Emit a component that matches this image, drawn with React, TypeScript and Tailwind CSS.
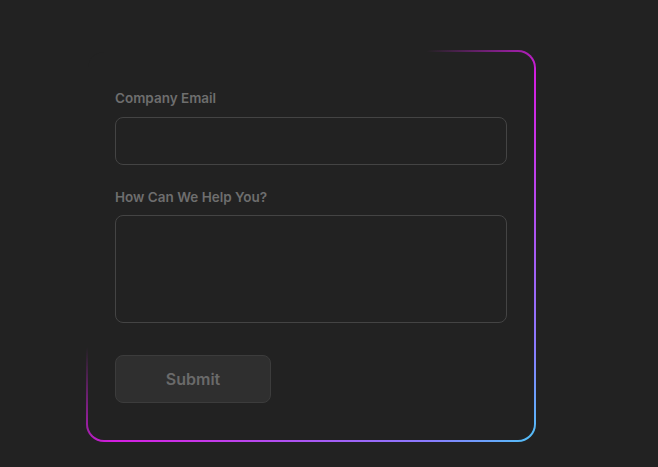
import React from 'react';

const Field: React.FC<{ label: string; tall?: boolean; gap?: string }> = ({ label, tall, gap }) => (
  <div className="flex flex-col">
    <label className={`text-[13.5px] font-semibold leading-5 text-[#6e6e6e] ${gap ?? 'mb-2'}`}>{label}</label>
    {tall ? (
      <textarea className="h-[108px] w-full resize-none rounded-lg border border-[#444444] bg-[#222222] outline-none" />
    ) : (
      <input className="h-[48px] w-full rounded-lg border border-[#444444] bg-[#222222] outline-none" />
    )}
  </div>
);

export default function App() {
  return (
    <div
      className="min-h-[467px] w-full bg-[#222222] pl-[86px] pt-[50px]"
      style={{ fontFamily: 'Inter, "Noto Sans", sans-serif' }}
    >
      {/* Gradient border card */}
      <div className="w-[450px] rounded-[18px] bg-[linear-gradient(to_bottom_right,transparent_0%,transparent_38%,#d41ee0_53%,#c935e8_62%,#8a7cff_88%,#4fc3f7_100%)] p-[2px]">
        <div className="flex flex-col rounded-[16px] bg-[#222222] px-[27px] pb-[37px] pt-9">
          <Field label="Company Email" gap="mb-[9px]" />
          <div className="mt-[22px]">
            <Field label="How Can We Help You?" tall />
          </div>
          <button className="mt-[32px] h-[48px] w-[156px] rounded-lg border border-[#3c3c3c] bg-[#2f2f2f] text-base font-semibold text-[#6a6a6a]">
            Submit
          </button>
        </div>
      </div>
    </div>
  );
}
